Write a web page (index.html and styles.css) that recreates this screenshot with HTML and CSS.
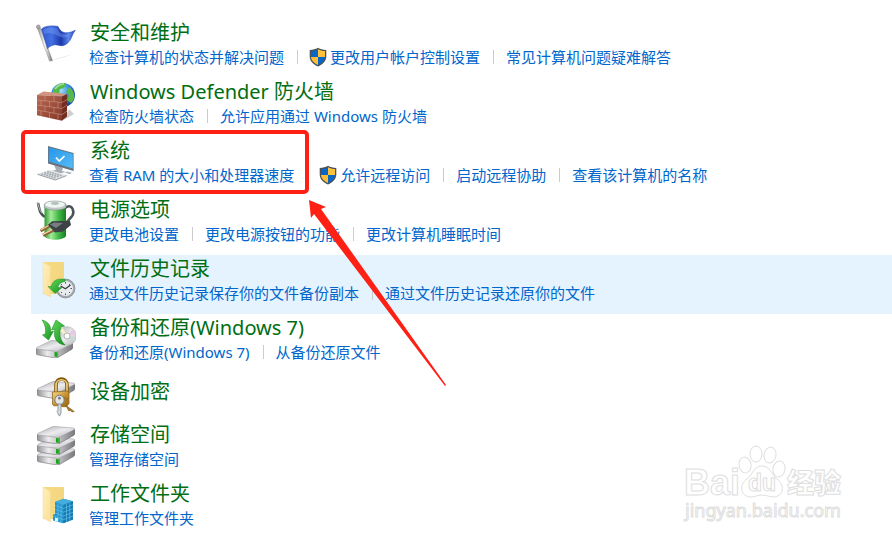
FILE: index.html
```
<!DOCTYPE html>
<html lang="zh-CN">
<head>
<meta charset="utf-8">
<title>系统和安全</title>
<link rel="stylesheet" href="styles.css">
</head>
<body>
<svg class="defs" width="0" height="0" aria-hidden="true">
  <defs>
    <linearGradient id="flagfold" x1="0" y1="0" x2="1" y2="0"><stop offset="0" stop-color="#3157cb"/><stop offset=".3" stop-color="#4271e4"/><stop offset=".58" stop-color="#1b37aa"/><stop offset=".8" stop-color="#5d86ec"/><stop offset="1" stop-color="#284abf"/></linearGradient>
    <linearGradient id="metal" x1="0" y1="0" x2="1" y2="0"><stop offset="0" stop-color="#8e8e8e"/><stop offset=".5" stop-color="#f6f6f6"/><stop offset="1" stop-color="#777"/></linearGradient>
    <linearGradient id="silver" x1="0" y1="0" x2="1" y2="1"><stop offset="0" stop-color="#a9a9ad"/><stop offset=".5" stop-color="#ececef"/><stop offset="1" stop-color="#b5b5ba"/></linearGradient>
    <linearGradient id="side" x1="0" y1="0" x2="1" y2="0"><stop offset="0" stop-color="#909094"/><stop offset=".3" stop-color="#ececed"/><stop offset=".6" stop-color="#bcbcbf"/><stop offset="1" stop-color="#77777b"/></linearGradient>
    <linearGradient id="brick" x1="0" y1="0" x2="1" y2="1"><stop offset="0" stop-color="#b96a55"/><stop offset="1" stop-color="#853728"/></linearGradient>
    <radialGradient id="globe" cx=".4" cy=".3" r=".7"><stop offset="0" stop-color="#a6e2ff"/><stop offset=".5" stop-color="#3692e0"/><stop offset="1" stop-color="#1644a0"/></radialGradient>
    <linearGradient id="screen" x1="0" y1="0" x2="1" y2="1"><stop offset="0" stop-color="#2495e8"/><stop offset="1" stop-color="#56bdf7"/></linearGradient>
    <linearGradient id="cell" x1="0" y1="0" x2="1" y2="0"><stop offset="0" stop-color="#2d9a31"/><stop offset=".3" stop-color="#a5eb9a"/><stop offset=".65" stop-color="#42ba48"/><stop offset="1" stop-color="#1d7a24"/></linearGradient>
    <linearGradient id="folder" x1="0" y1="0" x2="1" y2="0"><stop offset="0" stop-color="#f7dc85"/><stop offset="1" stop-color="#f3d67f"/></linearGradient>
    <linearGradient id="folderfront" x1="0" y1="0" x2="1" y2="1"><stop offset="0" stop-color="#fff0b8"/><stop offset="1" stop-color="#f9e09a"/></linearGradient>
    <linearGradient id="green" x1="0" y1="0" x2="1" y2="1"><stop offset="0" stop-color="#65e05b"/><stop offset="1" stop-color="#118b1d"/></linearGradient>
    <linearGradient id="gold" x1="0" y1="0" x2="1" y2="1"><stop offset="0" stop-color="#f5dc8c"/><stop offset=".5" stop-color="#ca9534"/><stop offset="1" stop-color="#966310"/></linearGradient>
    <symbol id="shield" viewBox="0 0 18 20">
      <path d="M9 .7 C11.4 2.1 14 2.8 17.3 2.9 V9.4 C17.3 14.2 13.5 17.5 9 19.4 C4.5 17.5 .7 14.2 .7 9.4 V2.9 C4 2.8 6.6 2.1 9 .7Z" fill="#4d5257"/>
      <path d="M9 2.2V10H2V4.1C4.7 3.9 7 3.3 9 2.2Z" fill="#0866c6"/>
      <path d="M9 2.2V10H16V4.1C13.3 3.9 11 3.3 9 2.2Z" fill="#ffc23b"/>
      <path d="M2 10H9V17.9C5 16.1 2.2 13.6 2 10Z" fill="#ffbd35"/>
      <path d="M16 10H9V17.9C13 16.1 15.8 13.6 16 10Z" fill="#0866c6"/>
    </symbol>
    <symbol id="drive" viewBox="0 0 38 17" preserveAspectRatio="none">
      <path d="M0 8 V12.2 Q0 13.6 1.5 14 L20 17 Q22 17 23 16.2 L37 8.7 Q38 8 38 6.7 V3Z" fill="url(#side)" stroke="#77777c" stroke-width=".6"/>
      <path d="M1 7 L15 .8 Q16.4 .2 18 .5 L36.8 2 Q38.5 2.6 37 3.6 L23 10.3 Q21.6 10.9 20 10.6 L1 8.5 Q-.4 7.9 1 7Z" fill="url(#silver)" stroke="#929296" stroke-width=".5"/>
      <path d="M22.5 11 V16.4" stroke="#777" stroke-width=".7"/>
      <path d="M19 11.4 L21.8 11.6 V16 L19 15.6Z" fill="#16a718"/>
    </symbol>
  </defs>
</svg>
<main class="panel">
  <section class="item">
    <svg class="icon" viewBox="0 0 40 40" aria-hidden="true">
      <path d="M15 38 L32 33 L38 31 L22 35Z" fill="#e6e6e6"/>
      <path d="M1.2 4.5 L4 4 L16.5 37.6 L13.6 38.2Z" fill="url(#metal)" stroke="#777" stroke-width=".4"/>
      <circle cx="2.3" cy="3.8" r="1.9" fill="#ababab" stroke="#777" stroke-width=".5"/>
      <path d="M5.5 6 C9 2.5 17 2.5 22 3.5 C24 8 28 13 39.3 7.3 C36 11 35.5 17 31.5 20.2 C25 25.5 22 20.5 17.5 22 C14 22.8 12.5 24.5 11.6 25.7Z" fill="url(#flagfold)" stroke="#2042b2" stroke-width=".6"/>
      <path d="M7 6.5 C12 4 17 4 21 5 C23 10 28 14 36 10 C31 16 25 15 20 12 C15 9 10 10 8.5 11Z" fill="#7ba2f7" opacity=".4"/>
    </svg>
    <div class="content">
      <a class="title" href="#">安全和维护</a>
      <ul class="links">
        <li><a href="#">检查计算机的状态并解决问题</a></li>
        <li class="admin"><a href="#"><svg class="shield" aria-hidden="true"><use href="#shield"/></svg>更改用户帐户控制设置</a></li>
        <li><a href="#">常见计算机问题疑难解答</a></li>
      </ul>
    </div>
  </section>
  <section class="item">
    <svg class="icon" viewBox="0 0 40 40" aria-hidden="true">
      <path d="M28 38 L38 32 L33 27Z" fill="#cfcfcf"/>
      <circle cx="27" cy="13" r="12" fill="url(#globe)"/>
      <path d="M17 9 C20 1 28 0 30 2 L28 6 L24 7 L23 12 L18 13Z M33 5 C39 9 40 17 35 21 L31 18 L33 13 L30 10Z M24 14 L30 16 L28 23 L24 21Z" fill="#58b946"/>
      <path d="M19 7 C22 3 25 2 28 2" fill="none" stroke="#d8ffd0" stroke-width="1.5" opacity=".6"/>
      <path d="M1 13 L7.5 9.5 L31 12 L26 14.5Z" fill="#d09480"/>
      <path d="M26 14.5 L31 12 V34.5 L26 38.8Z" fill="#732c20"/>
      <path d="M1 13 L26 14.5 V38.8 L1 33.2Z" fill="url(#brick)"/>
      <path d="M1 18 L26 20.5 L31 17.6 M1 23 L26 26.5 L31 23 M1 28 L26 32.6 L31 29 M9 13.7V18.8 M18 14.2V19.6 M5 18.5V23.5 M13.5 19.3V24.7 M22 20.2V25.8 M9 24.2V29.5 M18 25.5V31 M5 28.8V34 M13.5 30.3V36 M22 32V37.8" fill="none" stroke="#cf9887" stroke-width=".6"/>
    </svg>
    <div class="content">
      <a class="title" href="#">Windows Defender 防火墙</a>
      <ul class="links">
        <li><a href="#">检查防火墙状态</a></li>
        <li><a href="#">允许应用通过 Windows 防火墙</a></li>
      </ul>
    </div>
  </section>
  <section class="item">
    <svg class="icon" viewBox="0 0 40 40" aria-hidden="true">
      <path d="M18 24 L27 26.8 L26 30 L30 31 L23 32.5 L15 30.2 L20 28.8Z" fill="#a7adb4"/>
      <path d="M12 5 L37.6 12 V30 L12 22.4Z" fill="#68737d"/>
      <path d="M12.8 6.2 L36.8 12.8 V27.6 L12.8 20.6Z" fill="url(#screen)"/>
      <path d="M20 16.6 L23.3 20 L28.5 15" fill="none" stroke="#fff" stroke-width="1.7"/>
      <path d="M1.5 32.8 L13.5 28.7 L30.6 34 L19.3 38.4Z" fill="#e5e7e9"/>
      <path d="M1.5 32.8 L19.3 38.4 L30.6 34 V35 L19.3 39.4 L1.5 33.8Z" fill="#92989e"/>
      <path d="M5.2 32.7 L20 37.2 M8.2 31.6 L23 36 M11.2 30.4 L26.3 34.9" stroke="#a8aeb4" stroke-width="1.6" stroke-dasharray="2 .6"/>
      <path d="M31 30.5 L36 31.8 L34 33.2 L29 31.8Z" fill="#aeb6be"/>
    </svg>
    <div class="content">
      <a class="title" href="#">系统</a>
      <ul class="links">
        <li><a href="#">查看 RAM 的大小和处理器速度</a></li>
        <li class="admin"><a href="#"><svg class="shield" aria-hidden="true"><use href="#shield"/></svg>允许远程访问</a></li>
        <li><a href="#">启动远程协助</a></li>
        <li><a href="#">查看该计算机的名称</a></li>
      </ul>
    </div>
    <span class="highlight-box"></span>
    <svg class="arrow" viewBox="0 0 140 190" aria-hidden="true"><path d="M1 2 L18 9 L13 11 L138 187 L137 188 L6 16 L3 20Z"/></svg>
  </section>
  <section class="item">
    <svg class="icon" viewBox="0 0 40 40" aria-hidden="true">
      <path d="M2 3 C3.5 9 3 13 9 17 M28 9 C34 3 37 8 37.3 12 C38 18 31 18 30 25" fill="none" stroke="#4b5357" stroke-width="2.6"/>
      <path d="M1.2 2 C3 6 3 10 6 13" fill="none" stroke="#b8bdbf" stroke-width="1"/>
      <path d="M8.5 6 V36 C11 41 27 41 30 36 V6Z" fill="url(#cell)"/>
      <path d="M8.3 7.5 V4 C11 0 27 0 30 4 V7.5 C26 11 12 11 8.3 7.5Z" fill="#bfc8c6" stroke="#728079" stroke-width=".5"/>
      <ellipse cx="19" cy="4.6" rx="9.8" ry="3.2" fill="#eff5f3"/>
      <ellipse cx="19" cy="3.3" rx="4" ry="1.6" fill="#b4c0bd"/>
      <path d="M4.5 30.8 L14 25.5 M7 35.2 L18 29.8" stroke="#8c6238" stroke-width="3.2"/>
      <path d="M4.5 30 L14 24.8 M7 34.4 L17 29.2" stroke="#efd3a1" stroke-width="1.3"/>
      <path d="M12 25 L16 21.3 L26 21 L34 21 L35 25 L27 31.5 L19 32.6Z" fill="#3d4245"/>
      <path d="M14 24.5 L18 22.4 L27 23 L20 28Z" fill="#777d80"/>
    </svg>
    <div class="content">
      <a class="title" href="#">电源选项</a>
      <ul class="links">
        <li><a href="#">更改电池设置</a></li>
        <li><a href="#">更改电源按钮的功能</a></li>
        <li><a href="#">更改计算机睡眠时间</a></li>
      </ul>
    </div>
  </section>
  <section class="item selected">
    <svg class="icon" viewBox="0 0 40 40" aria-hidden="true">
      <path d="M7 3 H28 V35 H7Z" fill="url(#folder)"/>
      <path d="M7 3 L14.5 7.5 V38 L7 34Z" fill="url(#folderfront)" stroke="#efd58b" stroke-width=".4"/>
      <circle cx="29.5" cy="29.5" r="9.4" fill="#a5a9ac" stroke="#858b90" stroke-width=".8"/>
      <circle cx="29.5" cy="29.5" r="7.6" fill="#e9ecee"/>
      <path d="M29.5 23.2V24.7 M29.5 34.5V36 M23 29.5H24.5 M34.5 29.5H36 M25 25L26 26 M34 25L33 26 M25 34L26 33 M34 34L33 33" stroke="#555" stroke-width="1"/>
      <path d="M24.5 27 L29.5 29.8 L34.5 26" fill="none" stroke="#363c40" stroke-width="1.3"/>
      <path d="M29 20.5 C21.5 18.7 16 22 15.5 27.5 H12 L19 34.5 L26 28.5 H22 C22 25.5 25 22.8 29 22.5Z" fill="url(#green)" stroke="#188c21" stroke-width=".5"/>
    </svg>
    <div class="content">
      <a class="title" href="#">文件历史记录</a>
      <ul class="links">
        <li><a href="#">通过文件历史记录保存你的文件备份副本</a></li>
        <li><a href="#">通过文件历史记录还原你的文件</a></li>
      </ul>
    </div>
  </section>
  <section class="item">
    <svg class="icon" viewBox="0 0 40 40" aria-hidden="true">
      <use href="#drive" x="0" y="22" width="37" height="18"/>
      <circle cx="31" cy="18" r="9.3" fill="url(#silver)" stroke="#aaa" stroke-width=".6"/>
      <path d="M31 18 L37 11 L40 16Z" fill="#e8c9e4"/><path d="M31 18 L40 20 L38 24Z" fill="#c5ddd1"/>
      <path d="M31 18 L23 13 L27 10Z" fill="#f8efcb"/>
      <circle cx="31" cy="18" r="3" fill="#fff" stroke="#999" stroke-width=".7"/>
      <path d="M6 2 C13 4 15 8 14.5 14 L17.5 13 L12.5 22 L6.5 17 L9.3 16 C10.5 10 8.5 6 6 2Z" fill="url(#green)" stroke="#178b20" stroke-width=".6"/>
      <path d="M29 27 C20 26 17 19 19 11 L15.5 12 L20 2 L28.5 8 L25 9 C22.5 16 24 22 29 27Z" fill="url(#green)" stroke="#178b20" stroke-width=".6"/>
    </svg>
    <div class="content">
      <a class="title" href="#">备份和还原(Windows 7)</a>
      <ul class="links">
        <li><a href="#">备份和还原(Windows 7)</a></li>
        <li><a href="#">从备份还原文件</a></li>
      </ul>
    </div>
  </section>
  <section class="item single">
    <svg class="icon" viewBox="0 0 40 40" aria-hidden="true">
      <use href="#drive" x="1" y="4" width="38" height="18"/>
      <path d="M20 16 V8 C20 0 31 0 31 8 V16" fill="none" stroke="#80560d" stroke-width="3.6"/>
      <path d="M20 16 V8 C20 1 31 1 31 8 V16" fill="none" stroke="#ebce77" stroke-width="1.7"/>
      <path d="M16.5 15 L31.5 14 L33 15.5 V27 L18 29 L16.5 27.5Z" fill="url(#gold)" stroke="#88601a" stroke-width=".7"/>
      <circle cx="28" cy="25" r="4" fill="none" stroke="#a57620" stroke-width="2.5"/>
      <path d="M29.5 28 L38.3 34.5 L36 35 L34.5 33.5 L32.8 34Z" fill="#a87a21" stroke="#73500e" stroke-width=".5"/>
      <circle cx="23.5" cy="23" r="4.7" fill="#e3e5e6" stroke="#737b80" stroke-width="1"/>
      <circle cx="23.4" cy="21.2" r="1.4" fill="#777d80"/>
      <path d="M22 27 H25 V36 L23.7 39 L22 37.5 V35.5 L20.9 34.5 L22 33.3Z" fill="#d9dddf" stroke="#71797e" stroke-width=".7"/>
    </svg>
    <div class="content">
      <a class="title" href="#">设备加密</a>
    </div>
  </section>
  <section class="item">
    <svg class="icon" viewBox="0 0 40 40" aria-hidden="true">
      <use href="#drive" x="1" y="22" width="38" height="18"/>
      <use href="#drive" x="1" y="12" width="38" height="18"/>
      <use href="#drive" x="1" y="1" width="38" height="18"/>
    </svg>
    <div class="content">
      <a class="title" href="#">存储空间</a>
      <ul class="links"><li><a href="#">管理存储空间</a></li></ul>
    </div>
  </section>
  <section class="item">
    <svg class="icon" viewBox="0 0 40 40" aria-hidden="true">
      <path d="M7 3 H28 V35 H7Z" fill="url(#folder)"/>
      <path d="M7 3 L14.5 7.5 V38 L7 34Z" fill="url(#folderfront)" stroke="#efd58b" stroke-width=".4"/>
      <path d="M19 18 L27.5 14.8 L37 17.2 V35.5 L27 39.3 L17 36.4 V30.5 L19 30Z" fill="#2496cd"/>
      <path d="M19 18 L27.5 14.8 L37 17.2 L27.5 21Z" fill="#45aede"/>
      <path d="M27.5 21 L37 17.2 V35.5 L27.5 39.3Z" fill="#167bb2"/>
      <path d="M19 21.5 L27.5 24.5 L37 20.8 M19 25.2 L27.5 28.2 L37 24.5 M19 29 L27.5 32 L37 28.3 M17 32 L27.5 35.6 L37 32 M22 19.5V37.3 M25 20.5V38.3 M30.5 20V38 M33.7 18.8V36.7" fill="none" stroke="#62bfe6" stroke-width=".7"/>
      <path d="M19 33.5 L22 34.4 V37.7 L19 36.9Z" fill="#dff4ff"/>
    </svg>
    <div class="content">
      <a class="title" href="#">工作文件夹</a>
      <ul class="links"><li><a href="#">管理工作文件夹</a></li></ul>
    </div>
  </section>
  <svg class="watermark" viewBox="0 0 170 85" role="img" aria-label="Baidu 经验">
    <g class="outline">
      <text class="brand" x="3" y="54">Bai</text>
      <ellipse cx="64" cy="24" rx="6" ry="8" transform="rotate(-10 64 24)"/>
      <ellipse cx="75" cy="13" rx="6" ry="8"/>
      <ellipse cx="89" cy="14" rx="6" ry="8" transform="rotate(12 89 14)"/>
      <ellipse cx="98" cy="28" rx="6" ry="8" transform="rotate(10 98 28)"/>
      <path d="M81 25 C73 25 72 33 66 38 C58 43 59 55 69 56 C75 56 76 54 81 54 C86 54 88 56 93 56 C103 55 104 44 96 38 C90 33 89 25 81 25Z"/>
      <text class="du" x="67" y="50">du</text>
      <text class="cjk" x="106" y="52">经验</text>
    </g>
    <text class="url outline" x="4" y="76">jingyan.baidu.com</text>
  </svg>
</main>
</body>
</html>
```
FILE: styles.css
```
* {
  box-sizing: border-box;
}

body {
  margin: 0;
  background: #fff;
  font-family: "Noto Sans", "Noto Sans CJK SC", sans-serif;
  overflow-x: hidden;
}

.defs {
  position: absolute;
}

.panel {
  position: relative;
  padding: 19px 0 2px 31px;
}

.item {
  position: relative;
  display: flex;
  gap: 13px;
  padding: 0 5px 11px;
}

.selected {
  background: #e5f3ff;
}

.icon {
  flex: none;
  width: 40px;
  height: 40px;
  margin-top: 4px;
}

.content {
  min-width: 0;
}

.single {
  padding-bottom: 4px;
}

.single .content {
  padding-top: 5px;
}

.title {
  display: block;
  padding-left: 1px;
  color: #006e12;
  font-size: 20px;
  line-height: 28px;
  white-space: nowrap;
  text-decoration: none;
}

.links {
  display: flex;
  margin: 0;
  padding: 0;
  list-style: none;
  font-size: 15px;
  line-height: 20px;
  white-space: nowrap;
}

.links li {
  display: flex;
  align-items: center;
}

.links li + li::before {
  content: "";
  width: 1px;
  height: 14px;
  margin: 0 12px 0 13px;
  background: #ccc;
}

.links .admin::before {
  margin-right: 11px;
}

.links a {
  display: flex;
  align-items: center;
  gap: 3px;
  color: #0066cc;
  text-decoration: none;
}

.links a:hover,
.title:hover {
  text-decoration: underline;
}

.shield {
  width: 18px;
  height: 20px;
}

.highlight-box {
  position: absolute;
  top: -7px;
  left: -10px;
  width: 288px;
  height: 64px;
  border: 4px solid #ff2015;
  border-radius: 5px;
  pointer-events: none;
}

.arrow {
  position: absolute;
  z-index: 2;
  top: 61px;
  left: 277px;
  width: 140px;
  height: 190px;
  fill: #ff2015;
  pointer-events: none;
}

.watermark {
  position: absolute;
  right: 41px;
  bottom: 15px;
  width: 170px;
  height: 85px;
  pointer-events: none;
}

.outline {
  fill: #fff;
  stroke: #dedede;
  stroke-width: 1;
}

.brand {
  font: 700 36px "Liberation Sans", sans-serif;
}

.du {
  font: 700 23px "Liberation Sans", sans-serif;
}

.cjk {
  font: 900 27px "Noto Sans CJK SC", sans-serif;
}

.url {
  font: 400 18px "Noto Sans", sans-serif;
}
```
